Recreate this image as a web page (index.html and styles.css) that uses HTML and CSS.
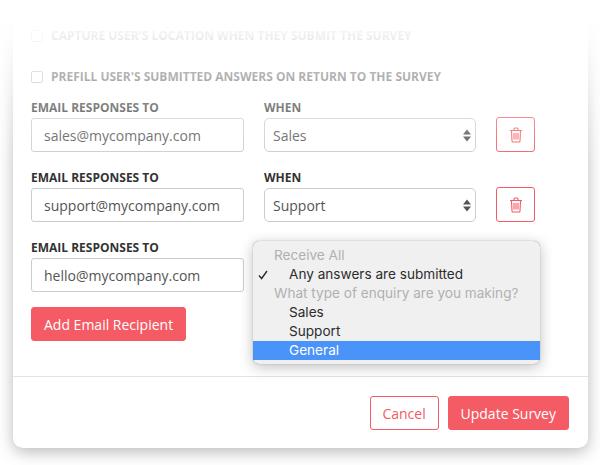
FILE: index.html
```html
<!DOCTYPE html>
<html lang="en">

<head>
    <meta charset="UTF-8" />
    <meta name="viewport" content="width=device-width, initial-scale=1.0" />
    <title>Edit Survey</title>
    <link rel="stylesheet" href="styles.css">
</head>

<body>
    <div class="card">
        <div class="card-body">
            <label class="check-row">
                <input type="checkbox" />
                <span>Capture user's location when they submit the survey</span>
            </label>
            <label class="check-row">
                <input type="checkbox" />
                <span>Prefill user's submitted answers on return to the survey</span>
            </label>

            <div class="recipients">
                <div class="recipient">
                    <div class="field field-email">
                        <label>Email responses to</label>
                        <input type="text" value="sales@mycompany.com" />
                    </div>
                    <div class="field field-when">
                        <label>When</label>
                        <div class="select-box">
                            <span>Sales</span>
                            <svg class="arrows" width="8" height="13" viewBox="0 0 8 13">
                                <path d="M4 0.5 L8 5.5 H0 Z M0 7.5 H8 L4 12.5 Z" />
                            </svg>
                        </div>
                    </div>
                    <button class="btn-trash">
                        <svg width="14" height="16" viewBox="0 0 14 16">
                            <path d="M1 3.5 H13 M5 3.5 V2 Q5 1 6 1 H8 Q9 1 9 2 V3.5 M2.5 3.5 L3 14 Q3 15 4 15 H10 Q11 15 11 14 L11.5 3.5 M5 6 V12.5 M7 6 V12.5 M9 6 V12.5" />
                        </svg>
                    </button>
                </div>

                <div class="recipient">
                    <div class="field field-email">
                        <label>Email responses to</label>
                        <input type="text" value="support@mycompany.com" />
                    </div>
                    <div class="field field-when">
                        <label>When</label>
                        <div class="select-box">
                            <span>Support</span>
                            <svg class="arrows" width="8" height="13" viewBox="0 0 8 13">
                                <path d="M4 0.5 L8 5.5 H0 Z M0 7.5 H8 L4 12.5 Z" />
                            </svg>
                        </div>
                    </div>
                    <button class="btn-trash">
                        <svg width="14" height="16" viewBox="0 0 14 16">
                            <path d="M1 3.5 H13 M5 3.5 V2 Q5 1 6 1 H8 Q9 1 9 2 V3.5 M2.5 3.5 L3 14 Q3 15 4 15 H10 Q11 15 11 14 L11.5 3.5 M5 6 V12.5 M7 6 V12.5 M9 6 V12.5" />
                        </svg>
                    </button>
                </div>

                <div class="recipient recipient-open">
                    <div class="field field-email">
                        <label>Email responses to</label>
                        <input type="text" value="hello@mycompany.com" />
                    </div>
                    <ul class="dropdown">
                        <li class="group">Receive All</li>
                        <li class="checked">
                            <svg class="tick" width="10" height="10" viewBox="0 0 10 10">
                                <path d="M1 5.5 L3.6 8.5 L9 1" />
                            </svg>
                            Any answers are submitted
                        </li>
                        <li class="group">What type of enquiry are you making?</li>
                        <li>Sales</li>
                        <li>Support</li>
                        <li class="active">General</li>
                    </ul>
                </div>
            </div>

            <button class="btn btn-red btn-add">Add Email Recipient</button>
        </div>

        <div class="card-footer">
            <button class="btn btn-outline">Cancel</button>
            <button class="btn btn-red">Update Survey</button>
        </div>
    </div>

    <!-- top of the modal fades out -->
    <div class="top-fade"></div>
</body>

</html>
```

FILE: styles.css
```css
* {
    box-sizing: border-box;
    font-family: 'Open Sans', sans-serif;
}

body {
    margin: 0;
    background-color: white;
    height: 465px;
    overflow: hidden;
    position: relative;
}

.card {
    margin-left: 13px;
    width: 575px;
    height: 448px;
    background-color: white;
    border-radius: 0 0 10px 10px;
    box-shadow: 0 4px 16px rgba(0, 0, 0, 0.28);
}

.card-body {
    padding: 25px 18px 0;
    height: 377px;
    border-bottom: 1px solid #e4e4e4;
}

.check-row {
    display: flex;
    align-items: center;
    gap: 8px;
    height: 20px;
    margin-bottom: 21px;
    font-size: 12px;
    font-weight: 700;
    color: #333;
    text-transform: uppercase;
}

.check-row input {
    appearance: none;
    width: 12px;
    height: 12px;
    margin: 1px 0 0;
    background-color: white;
    border: 1px solid #aaa;
    border-radius: 2px;
}

.recipients {
    margin-top: -9px;
    display: flex;
    flex-direction: column;
    gap: 16px;
}

.recipient {
    display: flex;
    align-items: flex-end;
    position: relative;
}

.field label {
    display: block;
    height: 18px;
    line-height: 20px;
    margin-bottom: 2px;
    font-size: 12px;
    font-weight: 700;
    color: #333;
    text-transform: uppercase;
}

.field-email {
    width: 213px;
    margin-right: 20px;
}

.field-when {
    width: 212px;
    margin-right: 20px;
}

.field input {
    display: block;
    width: 100%;
    height: 34px;
    padding: 0 12px;
    border: 1px solid #ccc;
    border-radius: 3px;
    font-size: 14px;
    color: #555;
}

.select-box {
    display: flex;
    justify-content: space-between;
    align-items: center;
    height: 34px;
    padding: 0 4px 0 8px;
    border: 1px solid #ccc;
    border-radius: 5px;
    font-size: 14px;
    color: #555;
}

.arrows {
    fill: #555;
}

.btn-trash {
    display: flex;
    align-items: center;
    justify-content: center;
    width: 39px;
    height: 35px;
    padding: 0;
    background-color: white;
    border: 1px solid #f45b64;
    border-radius: 3px;
}

.btn-trash svg {
    fill: none;
    stroke: #f45b64;
    stroke-width: 1.1;
}

.btn {
    height: 34px;
    padding: 0 12px;
    border: 1px solid #f45b64;
    border-radius: 3px;
    font-size: 14px;
}

.btn-red {
    background-color: #f45b64;
    color: white;
}

.btn-outline {
    width: 69px;
    padding: 0;
    background-color: white;
    color: #f45b64;
}

.btn-add {
    margin-top: 15px;
}

.card-footer {
    display: flex;
    justify-content: flex-end;
    gap: 9px;
    padding: 19px 19px 0;
}

.dropdown {
    position: absolute;
    left: 222px;
    top: 3px;
    width: 287px;
    height: 123px;
    margin: 0;
    padding: 5px 0;
    list-style: none;
    background-color: #f0f0f0;
    border-radius: 6px;
    box-shadow: 0 0 1px rgba(0, 0, 0, 0.5), 0 3px 14px rgba(0, 0, 0, 0.25);
}

.dropdown li {
    position: relative;
    height: 19px;
    line-height: 19px;
    padding-left: 36px;
    font-family: 'Inter', sans-serif;
    font-size: 13.6px;
    color: #2c2c2c;
}

.dropdown li.group {
    padding-left: 21px;
    color: #b0b0b0;
}

.dropdown li.active {
    background-color: #4a93f8;
    color: white;
}

.tick {
    position: absolute;
    left: 5px;
    top: 5px;
    fill: none;
    stroke: #2c2c2c;
    stroke-width: 1.4;
}

.top-fade {
    position: absolute;
    left: 0;
    top: 0;
    width: 600px;
    height: 168px;
    pointer-events: none;
    background: linear-gradient(to bottom, white 0, white 15px, rgba(255, 255, 255, 0.93) 35px, rgba(255, 255, 255, 0.62) 76px, rgba(255, 255, 255, 0.35) 110px, rgba(255, 255, 255, 0) 168px);
}
```
